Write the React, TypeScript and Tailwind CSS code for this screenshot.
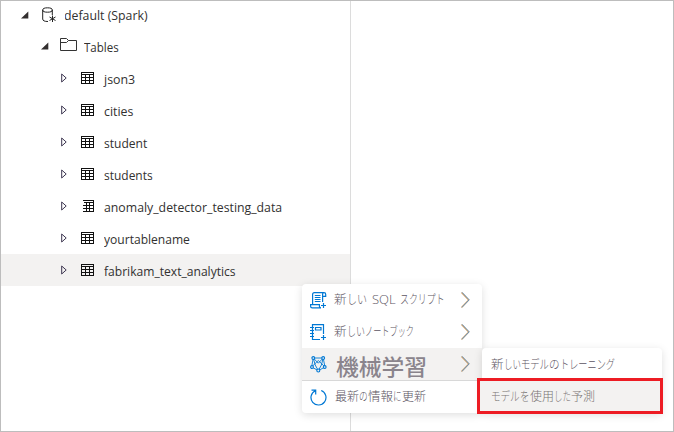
import { useLayoutEffect, useRef } from "react";
import type { ReactNode } from "react";

/** A run of text condensed or widened to an exact width. */
function Run({ text, width }: { text: string; width: number }) {
  const ref = useRef<HTMLSpanElement>(null);
  useLayoutEffect(() => {
    const el = ref.current;
    if (el) el.style.transform = `scaleX(${width / el.offsetWidth})`;
  }, [text, width]);
  return (
    <span className="inline-block whitespace-pre" style={{ width }}>
      <span ref={ref} className="inline-block origin-left">{text}</span>
    </span>
  );
}

function TableIcon({ narrow = false }: { narrow?: boolean }) {
  return (
    <svg width="13" height="12" viewBox="0 0 13 12" fill="none" stroke="#111" shapeRendering="crispEdges">
      {narrow ? (
        <path d="M2 .5H13M3 2.5H13M2 5.5H13M2 8.5H13M2 11.5H13M5.5 2V12M8.5 2V12M12.5 0V12" />
      ) : (
        <path d="M.5 .5H12.5V11.5H.5ZM0 2.5H13M0 5.5H13M0 8.5H13M4.5 2V12M8.5 2V12" />
      )}
    </svg>
  );
}

function Row({ name, width, narrow, active }: { name: string; width: number; narrow?: boolean; active?: boolean }) {
  return (
    <div className={`flex h-8 items-center pl-[60px] ${active ? "bg-[#f3f2f1]" : ""}`}>
      <svg className="mb-px" width="6" height="10" viewBox="0 0 6 10" fill="none" stroke="#3d3650">
        <path d="M.7 1V9L5.2 5Z" />
      </svg>
      <div className="ml-3.5">
        <TableIcon narrow={narrow} />
      </div>
      <span className="ml-[10px] pt-px leading-5">
        <Run text={name} width={width} />
      </span>
    </div>
  );
}

function Expanded() {
  return (
    <svg className="mb-px" width="8" height="8" viewBox="0 0 8 8">
      <path d="M7.3 .5V7.5H0Z" fill="#332e2e" />
    </svg>
  );
}

function Chevron() {
  return (
    <svg width="9" height="16" viewBox="0 0 9 16" fill="none">
      <path d="M.5 .5L7.7 8L.5 15.5" stroke="#d4a168" strokeWidth="1.3" />
      <path d="M1.1 .3L8.2 7.8L1 15.3" stroke="#5c93c4" strokeWidth=".9" />
    </svg>
  );
}

const blue = "#0078d4";

function ScriptIcon() {
  return (
    <svg width="17" height="17" viewBox="0 0 17 17" fill="none" stroke={blue} strokeWidth="1.2">
      <path d="M2.6 12.5V2.5Q2.6 .7 4.4 .7H14Q15.7 .7 15.7 2.4V4.4H12.6V10M12.6 4.4V2.4Q12.6 .7 14 .7M10 15.8H2.3Q.6 15.8.6 14.2V12.6H9.4V14.2Q9.4 15.8 11 15.8" />
      <path d="M4.8 3.5H10.5M4.8 5.5H10.5M4.8 7.5H10.5M4.8 9.5H10.5M11 13.5H16M13.5 11V16" />
    </svg>
  );
}

function NotebookIcon() {
  return (
    <svg width="17" height="17" viewBox="0 0 17 17" fill="none" stroke={blue} strokeWidth="1.2">
      <path d="M10 15.5H2.5V.6H13.5V10M5.5 3.5H11V6H5.5ZM0 3.5H4M0 6.5H4M0 9.5H4M0 12.5H4M11 13.5H16M13.5 11V16" />
    </svg>
  );
}

function GraphIcon() {
  return (
    <svg width="17" height="17" viewBox="0 0 17 17" fill="none" stroke={blue} strokeWidth=".9">
      <path d="M3.3 2H13.2L15 11L8.3 14.6L1.6 11ZM3.3 2L8.3 7.2L13.2 2M1.6 11L8.3 4.5L15 11M3.3 2L5.2 9L8.3 14.6M13.2 2L11.4 9L8.3 14.6" />
      <g fill="#f3f2f1" strokeWidth="1.1">
        <circle cx="3.3" cy="2" r="1.4" /><circle cx="13.2" cy="2" r="1.4" /><circle cx="2" cy="11" r="1.4" /><circle cx="14.7" cy="11" r="1.4" /><circle cx="8.3" cy="14.5" r="1.5" />
      </g>
    </svg>
  );
}

function RefreshIcon() {
  return (
    <svg width="17" height="17" viewBox="0 0 17 17" fill="none" stroke={blue} strokeWidth="1.2">
      <path d="M11.2 1.5A7.5 7.5 0 1 1 5.3 1.7M1.5 1.1H5.7V5.4" />
    </svg>
  );
}

function Item({ icon, children, arrow }: { icon: ReactNode; children: ReactNode; arrow?: boolean }) {
  return (
    <>
      <span className="w-[17px] shrink-0">{icon}</span>
      <span className="ml-[7px] flex grow items-center pb-px">{children}</span>
      {arrow && <Chevron />}
    </>
  );
}

export default function App() {
  return (
    <div className="relative flex h-[432px] w-[674px] overflow-hidden border border-[#bdbdbd] bg-white font-['Open_Sans','Noto_Sans_CJK_JP',sans-serif] text-[13.2px] text-[#323130]">
      <aside className="w-[350px] border-r border-[#dcdcdc]">
        <div className="flex h-[29px] items-center pl-5">
          <Expanded />
          <svg className="mb-0.5 ml-[13px]" width="15" height="16" viewBox="0 0 15 16" fill="none" stroke="#222">
            <ellipse cx="5.5" cy="3" rx="4.8" ry="2.2" />
            <path d="M.7 3V12Q.7 14.5 6 14.5M10.3 3V8M10.5 8.5V15M7.5 10L13.5 13.5M13.5 10L7.5 13.5" />
          </svg>
          <span className="ml-2 overflow-hidden pb-px leading-5">
            <span className="-ml-px block"><Run text="default (Spark)" width={84} /></span>
          </span>
        </div>
        <div className="flex h-8 items-center pl-10">
          <Expanded />
          <svg className="mb-1 ml-[11px]" width="17" height="13" viewBox="0 0 17 13" fill="none" stroke="#333">
            <path d="M.5 .5H6.5L8.5 2.5H16.5V12.5H.5ZM.5 4.5H6.5L8.5 2.5" />
          </svg>
          <span className="ml-[7px] pt-px leading-5"><Run text="Tables" width={35} /></span>
        </div>
        <Row name="json3" width={31} />
        <Row name="cities" width={29} />
        <Row name="student" width={43} />
        <Row name="students" width={49} />
        <Row name="anomaly_detector_testing_data" width={178} narrow />
        <Row name="yourtablename" width={86} />
        <Row name="fabrikam_text_analytics" width={132} active />
      </aside>

      <div className="absolute left-[301px] top-[283px] w-[180px] rounded bg-white font-['Noto_Sans_CJK_JP',sans-serif] text-[12.5px] font-light text-[#5c5562] shadow-[0_2px_9px_rgba(0,0,0,0.13)]">
        <div className="flex h-8 items-center pl-2 pr-3">
          <Item icon={<ScriptIcon />} arrow>
            <Run text="新" width={13} /><Run text="しい" width={20} />
            <span className="ml-[5px] font-['Open_Sans'] text-[13px] font-light"><Run text="SQL" width={24} /></span>
            <span className="ml-[4px]"><Run text="スクリプト" width={45} /></span>
          </Item>
        </div>
        <div className="flex h-8 items-center pl-2 pr-3">
          <Item icon={<NotebookIcon />} arrow>
            <Run text="新" width={13} /><Run text="しい" width={18} /><Run text="ノートブック" width={49} />
          </Item>
        </div>
        <div className="flex h-8 items-center bg-[#f3f2f1] pl-2 pr-3">
          <Item icon={<GraphIcon />} arrow>
            <span className="ml-[2px] pt-[3px] text-[22px] font-medium leading-6 text-[#8a848c]"><Run text="機械学習" width={91} /></span>
          </Item>
        </div>
        <div className="flex h-[33px] items-center rounded-b border-t border-[#d8d8d8] pl-2 pr-3">
          <Item icon={<RefreshIcon />}>
            <span className="flex pb-px pl-px">
              <Run text="最新" width={24} /><Run text="の" width={9} /><Run text="情報" width={25} /><Run text="に" width={9} /><Run text="更新" width={24} />
            </span>
          </Item>
        </div>
      </div>

      <div className="absolute left-[481px] top-[347px] w-[180px] rounded bg-white font-['Noto_Sans_CJK_JP',sans-serif] text-[12.5px] font-light text-[#5c5562] shadow-[0_2px_9px_rgba(0,0,0,0.13)]">
        <div className="flex h-8 items-center pl-[9px]">
          <Run text="新" width={13} /><Run text="しい" width={17} /><Run text="モデル" width={28} /><Run text="の" width={11} /><Run text="トレーニング" width={55} />
        </div>
        <div className="flex h-[33px] items-center bg-[#f3f2f1] pb-px pl-[9px] text-[#7a7474]">
          <Run text="モデル" width={29} /><Run text="を" width={10} /><Run text="使用" width={24} /><Run text="した" width={17} /><Run text="予測" width={24} />
        </div>
      </div>
      <div className="absolute left-[476px] top-[377px] flex h-9 w-[186px] border-[3px] border-[#ed1c24]">
        <div className="h-full w-[3px] bg-[#f3f2f1]" />
      </div>
    </div>
  );
}
